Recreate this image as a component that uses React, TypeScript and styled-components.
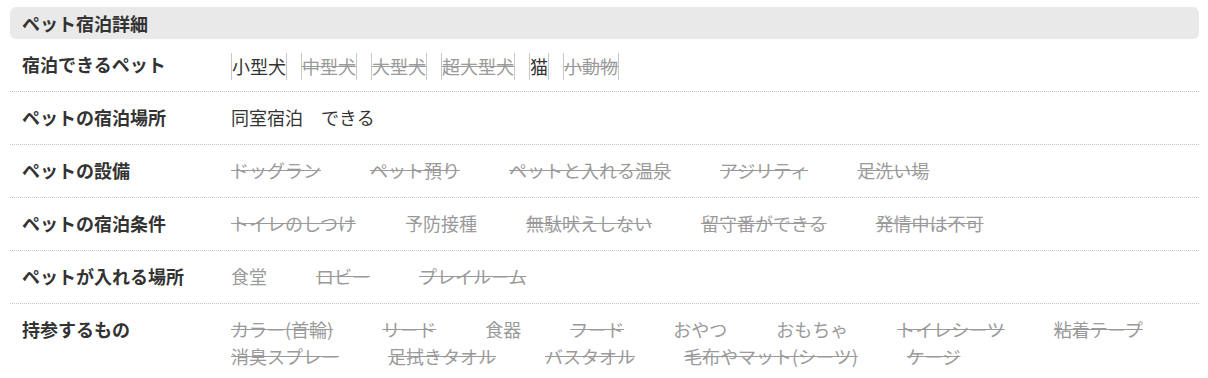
import React from 'react'
import styled, { createGlobalStyle } from 'styled-components'

const GlobalStyle = createGlobalStyle`
  html, body {
    margin: 0;
    padding: 0;
    background: #fff;
  }
  body {
    font-family: "Noto Sans CJK JP", "Noto Sans", sans-serif;
    color: #333;
  }
`

interface Item {
  label: string
  active?: boolean
  struck?: boolean
}

const PETS: Item[] = [
  { label: '小型犬', active: true },
  { label: '中型犬', struck: true },
  { label: '大型犬', struck: true },
  { label: '超大型犬', struck: true },
  { label: '猫', active: true },
  { label: '小動物', struck: true },
]

const ROWS: { title: string; items: Item[] }[] = [
  {
    title: 'ペットの設備',
    items: [
      { label: 'ドッグラン', struck: true },
      { label: 'ペット預り', struck: true },
      { label: 'ペットと入れる温泉', struck: true },
      { label: 'アジリティ', struck: true },
      { label: '足洗い場', struck: true },
    ],
  },
  {
    title: 'ペットの宿泊条件',
    items: [
      { label: 'トイレのしつけ', struck: true },
      { label: '予防接種' },
      { label: '無駄吠えしない', struck: true },
      { label: '留守番ができる', struck: true },
      { label: '発情中は不可', struck: true },
    ],
  },
  {
    title: 'ペットが入れる場所',
    items: [{ label: '食堂' }, { label: 'ロビー', struck: true }, { label: 'プレイルーム', struck: true }],
  },
  {
    title: '持参するもの',
    items: [
      { label: 'カラー(首輪)', struck: true },
      { label: 'リード', struck: true },
      { label: '食器' },
      { label: 'フード', struck: true },
      { label: 'おやつ' },
      { label: 'おもちゃ' },
      { label: 'トイレシーツ', struck: true },
      { label: '粘着テープ', struck: true },
      { label: '消臭スプレー', struck: true },
      { label: '足拭きタオル', struck: true },
      { label: 'バスタオル', struck: true },
      { label: '毛布やマット(シーツ)', struck: true },
      { label: 'ケージ', struck: true },
    ],
  },
]

export default function App() {
  return (
    <>
      <GlobalStyle />
      <Section>
        <Heading>ペット宿泊詳細</Heading>
        <List>
          <Row>
            <Label>宿泊できるペット</Label>
            <TagList>
              {PETS.map((pet) => (
                <Tag key={pet.label} $active={pet.active}>
                  {pet.label}
                </Tag>
              ))}
            </TagList>
          </Row>
          <Row>
            <Label>ペットの宿泊場所</Label>
            <Value>同室宿泊　できる</Value>
          </Row>
          {ROWS.map((row) => (
            <Row key={row.title}>
              <Label>{row.title}</Label>
              <ItemList>
                {row.items.map((item) => (
                  <ItemText key={item.label} $struck={item.struck}>
                    {item.label}
                  </ItemText>
                ))}
              </ItemList>
            </Row>
          ))}
        </List>
      </Section>
    </>
  )
}

const Section = styled.section`
  padding: 7px 9px 0 10px;
`

const Heading = styled.h2`
  margin: 0;
  height: 32px;
  padding: 0 12px;
  display: flex;
  align-items: center;
  background: #e9e9e9;
  border-radius: 6px;
  font-size: 18px;
  font-weight: 700;
  color: #333;
`

const List = styled.div`
  display: flex;
  flex-direction: column;
`

const Row = styled.div`
  display: grid;
  grid-template-columns: 209px 1fr;
  padding: 12px 0 13px 12px;
  border-bottom: 1px dotted #c4c4c4;
  font-size: 18px;
  line-height: 27px;

  &:last-child {
    border-bottom: none;
  }
`

const Label = styled.div`
  font-weight: 700;
  color: #333;
`

const Value = styled.div`
  color: #333;
`

const TagList = styled.div`
  display: flex;
  flex-wrap: wrap;
  gap: 0 14px;
  height: 27px;
`

const Tag = styled.span<{ $active?: boolean }>`
  display: inline-block;
  height: 27px;
  margin-top: 2px;
  border-left: 1px solid #c8c8c8;
  border-right: 1px solid #c8c8c8;
  color: ${(p) => (p.$active ? '#333' : '#9a9a9a')};
  text-decoration: ${(p) => (p.$active ? 'none' : 'line-through')};
`

const ItemList = styled.div`
  display: flex;
  flex-wrap: wrap;
  gap: 0 49px;
`

const ItemText = styled.span<{ $struck?: boolean }>`
  color: #9a9a9a;
  white-space: nowrap;
  text-decoration: ${(p) => (p.$struck ? 'line-through' : 'none')};
`
